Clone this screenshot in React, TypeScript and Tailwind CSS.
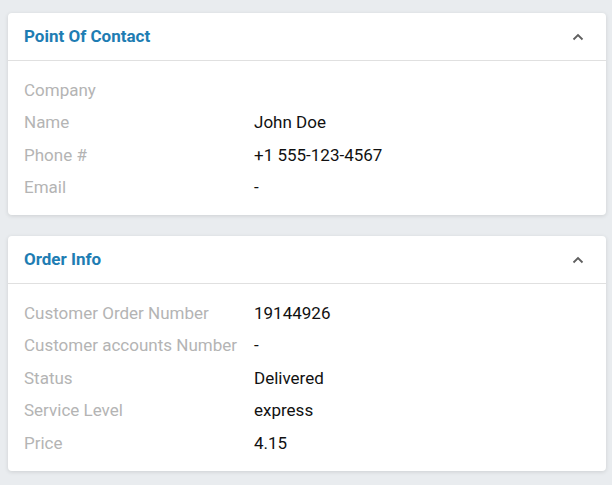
import React from "react";

type Row = [string, string];

function Card({ title, rows }: { title: string; rows: Row[] }) {
  return (
    <div className="bg-white rounded-[4px] shadow-[0_1px_4px_rgba(0,0,0,0.12)]">
      <div className="h-[48px] flex items-center justify-between pl-4 pr-[22px] border-b border-[#e0e0e0]">
        <span className="text-[17px] font-bold text-[#1e7db3]">{title}</span>
        <svg width="12" height="8" viewBox="0 0 12 8" fill="none">
          <path d="M1.5 6.5 L6 2 L10.5 6.5" stroke="#5f5f5f" strokeWidth="1.8" />
        </svg>
      </div>
      <div className="pt-[13px] pb-[11px] px-4">
        {rows.map(([k, v]) => (
          <div key={k} className="flex items-center h-[32.5px] text-[17px]">
            <span className="w-[230px] text-[#b4b4b4]">{k}</span>
            <span className="text-[#111]">{v}</span>
          </div>
        ))}
      </div>
    </div>
  );
}

export default function App() {
  return (
    <div
      className="min-h-[485px] bg-[#e9ecef] pt-[13px] pl-2 pr-[6px] pb-3 flex flex-col gap-[21px]"
      style={{ fontFamily: "Roboto, 'Liberation Sans', sans-serif" }}
    >
      <Card
        title="Point Of Contact"
        rows={[
          ["Company", ""],
          ["Name", "John Doe"],
          ["Phone #", "+1 555-123-4567"],
          ["Email", "-"],
        ]}
      />
      <Card
        title="Order Info"
        rows={[
          ["Customer Order Number", "19144926"],
          ["Customer accounts Number", "-"],
          ["Status", "Delivered"],
          ["Service Level", "express"],
          ["Price", "4.15"],
        ]}
      />
    </div>
  );
}
